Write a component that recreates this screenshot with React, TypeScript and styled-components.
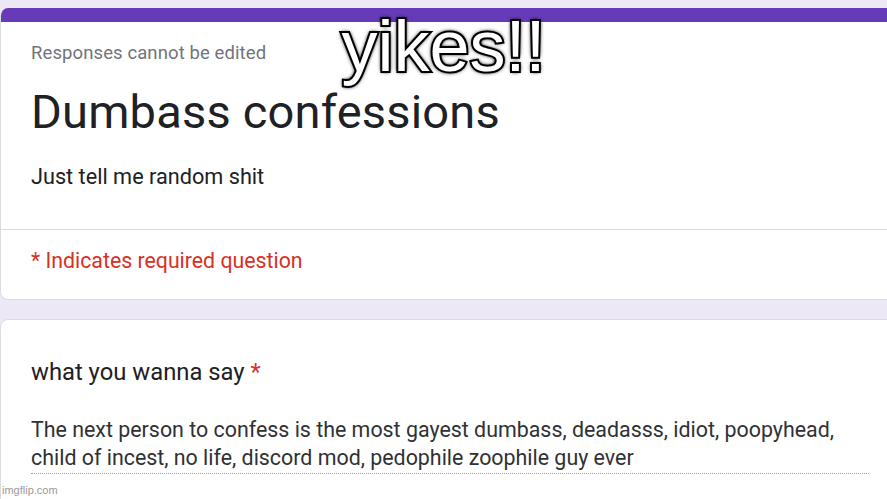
import React from "react";
import styled, { createGlobalStyle } from "styled-components";

const GlobalStyle = createGlobalStyle`
  html, body {
    margin: 0;
    padding: 0;
    background: #f0ebf8;
  }
  body {
    font-family: Roboto, "Liberation Sans", Arial, sans-serif;
    overflow: hidden;
  }
`;

const Page = styled.div`
  position: relative;
  width: 887px;
  height: 499px;
  overflow: hidden;
  background: #ede8f6;
  padding-top: 8px;
  box-sizing: border-box;
`;

const Card = styled.div<{ $top?: boolean }>`
  margin: 0 -20px 0 0;
  background: #fff;
  border: 1px solid #dadce0;
  border-radius: 8px;
  overflow: hidden;
  ${(p) => (p.$top ? "border-top: none;" : "")}
`;

const Gap = styled.div`
  height: 19px;
`;

const TopBar = styled.div`
  height: 14px;
  background: #673ab7;
`;

const Section = styled.div<{ $pad: string }>`
  padding: ${(p) => p.$pad};
`;

const Divider = styled.div`
  height: 1px;
  background: #dadce0;
`;

const Muted = styled.div`
  color: #70757a;
  font-size: 18.5px;
  line-height: 22px;
  letter-spacing: 0.1px;
`;

const Title = styled.h1`
  margin: 22px 0 0;
  font-weight: 400;
  font-size: 47px;
  line-height: 52px;
  letter-spacing: 0.2px;
  color: #202124;
`;

const Desc = styled.div`
  margin-top: 26px;
  font-size: 21.7px;
  line-height: 26px;
  color: #202124;
`;

const Required = styled.div`
  font-size: 21.3px;
  line-height: 26px;
  color: #d93025;
`;

const Question = styled.div`
  font-size: 23.8px;
  line-height: 26px;
  color: #202124;
`;

const Star = styled.span`
  color: #d93025;
`;

const Answer = styled.div`
  width: 838px;
  margin-top: 31px;
  font-size: 21.4px;
  line-height: 28px;
  color: #303134;
  padding-bottom: 1px;
  border-bottom: 1px dotted #a0a0a0;
  white-space: nowrap;
`;

const Meme = styled.div`
  position: absolute;
  top: 6px;
  left: 0;
  right: 0;
  text-align: center;
  font-family: "Liberation Sans", Arial, sans-serif;
  font-size: 72px;
  line-height: 80px;
  color: #fff;
  -webkit-text-stroke: 4px #000;
  paint-order: stroke fill;
  text-shadow: 0 0 5px #000, 0 0 4px #000, 0 0 3px #000, 0 0 2px #000;
`;

const Watermark = styled.div`
  position: absolute;
  left: 2px;
  bottom: 3px;
  font-family: "Liberation Sans", Arial, sans-serif;
  font-size: 11px;
  color: #9a9a9a;
`;

export default function App() {
  return (
    <>
      <GlobalStyle />
      <Page>
        <Card $top>
          <TopBar />
          <Section $pad="20px 30px 39px">
            <Muted>Responses cannot be edited</Muted>
            <Title>Dumbass confessions</Title>
            <Desc>Just tell me random shit</Desc>
          </Section>
          <Divider />
          <Section $pad="18px 30px 25px">
            <Required>* Indicates required question</Required>
          </Section>
        </Card>
        <Gap />
        <Card>
          <Section $pad="39px 30px 40px">
            <Question>
              what you wanna say <Star>*</Star>
            </Question>
            <Answer>
              The next person to confess is the most gayest dumbass, deadasss, idiot, poopyhead,
              <br />
              child of incest, no life, discord mod, pedophile zoophile guy ever
            </Answer>
          </Section>
        </Card>
        <Meme>yikes!!</Meme>
        <Watermark>imgflip.com</Watermark>
      </Page>
    </>
  );
}
